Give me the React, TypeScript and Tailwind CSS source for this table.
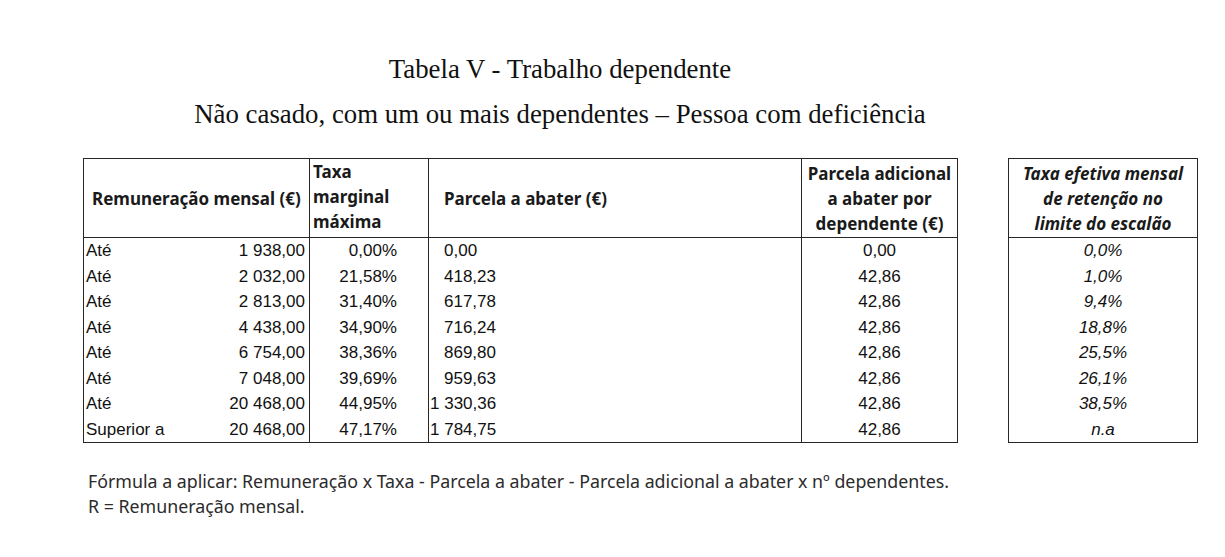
import React from "react";

type Row = {
    label: string;
    limit: string;
    rate: string;
    deduct: string;
    extra: string;
    effective: string;
};

const rows: Row[] = [
    { label: "Até", limit: "1 938,00", rate: "0,00%", deduct: "0,00", extra: "0,00", effective: "0,0%" },
    { label: "Até", limit: "2 032,00", rate: "21,58%", deduct: "418,23", extra: "42,86", effective: "1,0%" },
    { label: "Até", limit: "2 813,00", rate: "31,40%", deduct: "617,78", extra: "42,86", effective: "9,4%" },
    { label: "Até", limit: "4 438,00", rate: "34,90%", deduct: "716,24", extra: "42,86", effective: "18,8%" },
    { label: "Até", limit: "6 754,00", rate: "38,36%", deduct: "869,80", extra: "42,86", effective: "25,5%" },
    { label: "Até", limit: "7 048,00", rate: "39,69%", deduct: "959,63", extra: "42,86", effective: "26,1%" },
    { label: "Até", limit: "20 468,00", rate: "44,95%", deduct: "1 330,36", extra: "42,86", effective: "38,5%" },
    { label: "Superior a", limit: "20 468,00", rate: "47,17%", deduct: "1 784,75", extra: "42,86", effective: "n.a" },
];

const headFont = "font-['Noto_Sans',sans-serif] font-bold text-[17px] leading-[25px] text-[#1a1a1a]";
const cellFont = "font-['Liberation_Sans',Arial,sans-serif] text-[17px] leading-[25.5px] text-[#111]";

export default function App() {
    return (
        <div className="w-[1225px] h-[557px] bg-white relative">
            {/* titles */}
            <div className="w-[1120px] pt-[50px] font-['Liberation_Serif',serif] text-[26.8px] text-[#111] text-center">
                <div className="leading-[38px]">Tabela V - Trabalho dependente</div>
                <div className="leading-[38px] mt-[7px]">Não casado, com um ou mais dependentes – Pessoa com deficiência</div>
            </div>

            <div className="flex mt-[25px] ml-[83px] gap-[50px]">
                {/* main table */}
                <table className="table-fixed border-collapse border border-[#262626] w-[874px]">
                    <colgroup>
                        <col className="w-[226px]" />
                        <col className="w-[119px]" />
                        <col className="w-[373px]" />
                        <col className="w-[156px]" />
                    </colgroup>
                    <thead>
                        <tr className="h-[79px] border-b border-[#262626]">
                            <th className={`${headFont} text-left align-middle pl-[8px] border-r border-[#262626]`}>
                                Remuneração mensal (€)
                            </th>
                            <th className={`${headFont} text-left align-top pl-[3px] border-r border-[#262626]`}>
                                Taxa
                                <br />
                                marginal
                                <br />
                                máxima
                            </th>
                            <th className={`${headFont} text-left align-middle pl-[15px] border-r border-[#262626]`}>
                                Parcela a abater (€)
                            </th>
                            <th className={`${headFont} text-center align-middle whitespace-nowrap`}>
                                Parcela adicional
                                <br />
                                a abater por
                                <br />
                                dependente (€)
                            </th>
                        </tr>
                    </thead>
                    <tbody>
                        {rows.map((r, i) => (
                            <tr key={i} className="h-[25.5px]">
                                <td className={`${cellFont} border-r border-[#262626] pl-[2px] pr-[4px]`}>
                                    <div className="flex justify-between">
                                        <span>{r.label}</span>
                                        <span>{r.limit}</span>
                                    </div>
                                </td>
                                <td className={`${cellFont} border-r border-[#262626] text-right pr-[31px]`}>{r.rate}</td>
                                <td className={`${cellFont} border-r border-[#262626] ${i >= 6 ? "pl-[1px]" : "pl-[15px]"}`}>
                                    {r.deduct}
                                </td>
                                <td className={`${cellFont} text-center`}>{r.extra}</td>
                            </tr>
                        ))}
                    </tbody>
                </table>

                {/* effective rate table */}
                <table className="table-fixed border-collapse border border-[#262626] w-[190px]">
                    <thead>
                        <tr className="h-[79px] border-b border-[#262626]">
                            <th className={`${headFont} italic text-center align-middle whitespace-nowrap`}>
                                Taxa efetiva mensal
                                <br />
                                de retenção no
                                <br />
                                limite do escalão
                            </th>
                        </tr>
                    </thead>
                    <tbody>
                        {rows.map((r, i) => (
                            <tr key={i} className="h-[25.5px]">
                                <td className={`${cellFont} italic text-center`}>{r.effective}</td>
                            </tr>
                        ))}
                    </tbody>
                </table>
            </div>

            {/* formula note */}
            <div className="ml-[88px] mt-[26px] font-['Noto_Sans',sans-serif] text-[17.8px] leading-[25px] text-[#2b2b2b]">
                <div>Fórmula a aplicar: Remuneração x Taxa - Parcela a abater - Parcela adicional a abater x nº dependentes.</div>
                <div>R = Remuneração mensal.</div>
            </div>
        </div>
    );
}
